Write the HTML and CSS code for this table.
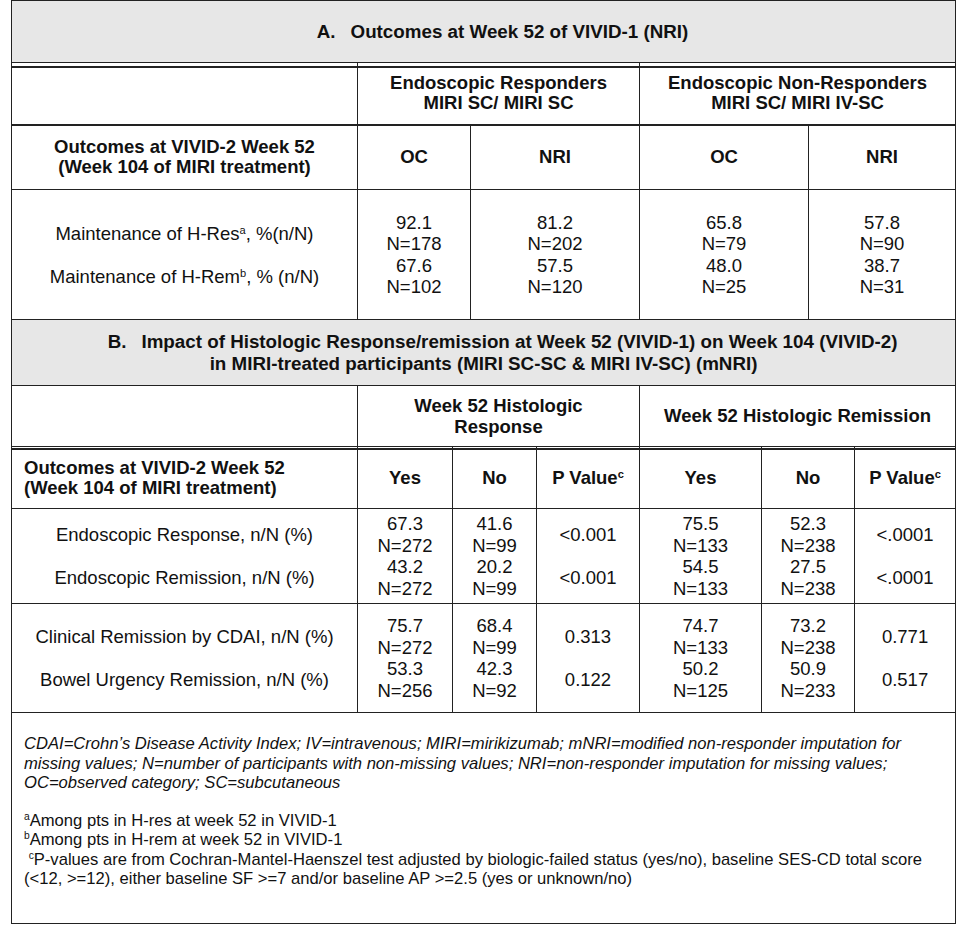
FILE: index.html
```html
<!DOCTYPE html>
<html lang="en">
<head>
<meta charset="utf-8">
<title>VIVID outcomes</title>
<link rel="stylesheet" href="styles.css">
</head>
<body>
<table class="sheet">
  <colgroup>
    <col class="c1"><col class="c2"><col class="c3"><col class="c4"><col class="c5"><col class="c6"><col class="c7"><col class="c8"><col class="c9">
  </colgroup>
  <tbody>
    <tr class="r-title-a">
      <td colspan="9" class="title"><span class="t1"><span class="lt">A.</span>Outcomes at Week 52 of VIVID-1 (NRI)</span></td>
    </tr>
    <tr class="r-grp-a">
      <td class="dbl"></td>
      <td colspan="4" class="hd dbl thick-b">Endoscopic Responders<br>MIRI SC/ MIRI SC</td>
      <td colspan="4" class="hd dbl thick-b">Endoscopic Non-Responders<br>MIRI SC/ MIRI IV-SC</td>
    </tr>
    <tr class="r-sub-a">
      <td class="hd thick-t">Outcomes at VIVID-2 Week 52<br>(Week 104 of MIRI treatment)</td>
      <td colspan="2" class="hd">OC</td>
      <td colspan="2" class="hd">NRI</td>
      <td colspan="2" class="hd">OC</td>
      <td colspan="2" class="hd">NRI</td>
    </tr>
    <tr class="r-data-a">
      <td class="lbl"><div>Maintenance of H-Res<sup>a</sup>, %(n/N)</div><div>Maintenance of H-Rem<sup>b</sup>, % (n/N)</div></td>
      <td colspan="2" class="num">92.1<br>N=178<br>67.6<br>N=102</td>
      <td colspan="2" class="num">81.2<br>N=202<br>57.5<br>N=120</td>
      <td colspan="2" class="num">65.8<br>N=79<br>48.0<br>N=25</td>
      <td colspan="2" class="num">57.8<br>N=90<br>38.7<br>N=31</td>
    </tr>
    <tr class="r-title-b">
      <td colspan="9" class="title"><span class="t1"><span class="lt">B.</span>Impact of Histologic Response/remission at Week 52 (VIVID-1) on Week 104 (VIVID-2)</span><span class="t2">in MIRI-treated participants (MIRI SC-SC &amp; MIRI IV-SC) (mNRI)</span></td>
    </tr>
    <tr class="r-grp-b">
      <td></td>
      <td colspan="4" class="hd hd-wide">Week 52 Histologic<br>Response</td>
      <td colspan="4" class="hd">Week 52 Histologic Remission</td>
    </tr>
    <tr class="r-sub-b">
      <td class="hd hd-left dbl2">Outcomes at VIVID-2 Week 52<br>(Week 104 of MIRI treatment)</td>
      <td class="hd dbl2">Yes</td>
      <td colspan="2" class="hd dbl2">No</td>
      <td class="hd dbl2">P Value<sup>c</sup></td>
      <td class="hd dbl2">Yes</td>
      <td colspan="2" class="hd dbl2">No</td>
      <td class="hd dbl2">P Value<sup>c</sup></td>
    </tr>
    <tr class="r-data-b1">
      <td class="lbl"><div>Endoscopic Response, n/N (%)</div><div>Endoscopic Remission, n/N (%)</div></td>
      <td class="num">67.3<br>N=272<br>43.2<br>N=272</td>
      <td colspan="2" class="num">41.6<br>N=99<br>20.2<br>N=99</td>
      <td class="lbl"><div>&lt;0.001</div><div>&lt;0.001</div></td>
      <td class="num">75.5<br>N=133<br>54.5<br>N=133</td>
      <td colspan="2" class="num">52.3<br>N=238<br>27.5<br>N=238</td>
      <td class="lbl"><div>&lt;.0001</div><div>&lt;.0001</div></td>
    </tr>
    <tr class="r-data-b2">
      <td class="lbl"><div>Clinical Remission by CDAI, n/N (%)</div><div>Bowel Urgency Remission, n/N (%)</div></td>
      <td class="num">75.7<br>N=272<br>53.3<br>N=256</td>
      <td colspan="2" class="num">68.4<br>N=99<br>42.3<br>N=92</td>
      <td class="lbl"><div>0.313</div><div>0.122</div></td>
      <td class="num">74.7<br>N=133<br>50.2<br>N=125</td>
      <td colspan="2" class="num">73.2<br>N=238<br>50.9<br>N=233</td>
      <td class="lbl"><div>0.771</div><div>0.517</div></td>
    </tr>
    <tr class="r-foot">
      <td colspan="9" class="foot">
        <p class="abbr">CDAI=Crohn’s Disease Activity Index; IV=intravenous; MIRI=mirikizumab; mNRI=modified non-responder imputation for<br>missing values; N=number of participants with non-missing values; NRI=non-responder imputation for missing values;<br>OC=observed category; SC=subcutaneous</p>
        <p class="notes"><sup>a</sup>Among pts in H-res at week 52 in VIVID-1<br><sup>b</sup>Among pts in H-rem at week 52 in VIVID-1<br>&nbsp;<sup>c</sup>P-values are from Cochran-Mantel-Haenszel test adjusted by biologic-failed status (yes/no), baseline SES-CD total score<br>(&lt;12, &gt;=12), either baseline SF &gt;=7 and/or baseline AP &gt;=2.5 (yes or unknown/no)</p>
      </td>
    </tr>
  </tbody>
</table>
</body>
</html>
```

FILE: styles.css
```css
html, body {
  margin: 0;
  padding: 0;
  background: #ffffff;
}

body {
  font-family: "Liberation Sans", Arial, sans-serif;
  color: #111111;
}

.sheet {
  margin: 0 0 0 11px;
  width: 944px;
  border-collapse: collapse;
  table-layout: fixed;
  font-size: 18.5px;
}

.c1 { width: 346px; }
.c2 { width: 95px; }
.c3 { width: 18px; }
.c4 { width: 66px; }
.c5 { width: 103px; }
.c6 { width: 122px; }
.c7 { width: 47px; }
.c8 { width: 46px; }
.c9 { width: 101px; }

.sheet td {
  border: 1px solid #222222;
  padding: 0;
  text-align: center;
  vertical-align: middle;
}

.r-title-a { height: 62px; }
.r-grp-a { height: 62px; }
.r-sub-a { height: 65px; }
.r-data-a { height: 130px; }
.r-title-b { height: 66px; }
.r-grp-b { height: 61px; }
.r-sub-b { height: 62px; }
.r-data-b1 { height: 95px; }
.r-data-b2 { height: 109px; }
.r-foot { height: 211px; }

.title {
  background: #e7e7e7;
  font-weight: bold;
  font-size: 18.8px;
  line-height: 21.5px;
}

.t1 {
  display: block;
  padding-left: 38px;
}

.t2 {
  display: block;
}

.lt {
  margin-right: 15px;
}

.hd {
  font-weight: bold;
  line-height: 20px;
}

.hd-wide {
  line-height: 21.5px;
}

.sheet .hd-left {
  text-align: left;
  padding-left: 12px;
}

.dbl {
  box-shadow: inset 0 3px 0 #ffffff, inset 0 5px 0 #222222;
}

.dbl2 {
  box-shadow: inset 0 1px 0 #ffffff, inset 0 3px 0 #222222;
}

.sheet .thick-b {
  border-bottom: 2px solid #222222;
}

.sheet .thick-t {
  border-top: 2px solid #222222;
}

.num {
  line-height: 21.5px;
}

.lbl div {
  line-height: 43px;
}

sup {
  font-size: 0.6em;
  line-height: 0;
  vertical-align: 0.55em;
}

.sheet .foot {
  text-align: left;
  vertical-align: top;
  padding: 21px 12px 0 12px;
  font-size: 16.6px;
  line-height: 19.5px;
}

.foot p {
  margin: 0;
}

.abbr {
  font-style: italic;
}

.foot .notes {
  margin-top: 18px;
}

.notes sup {
  font-size: 0.62em;
  vertical-align: 0.6em;
}
```
